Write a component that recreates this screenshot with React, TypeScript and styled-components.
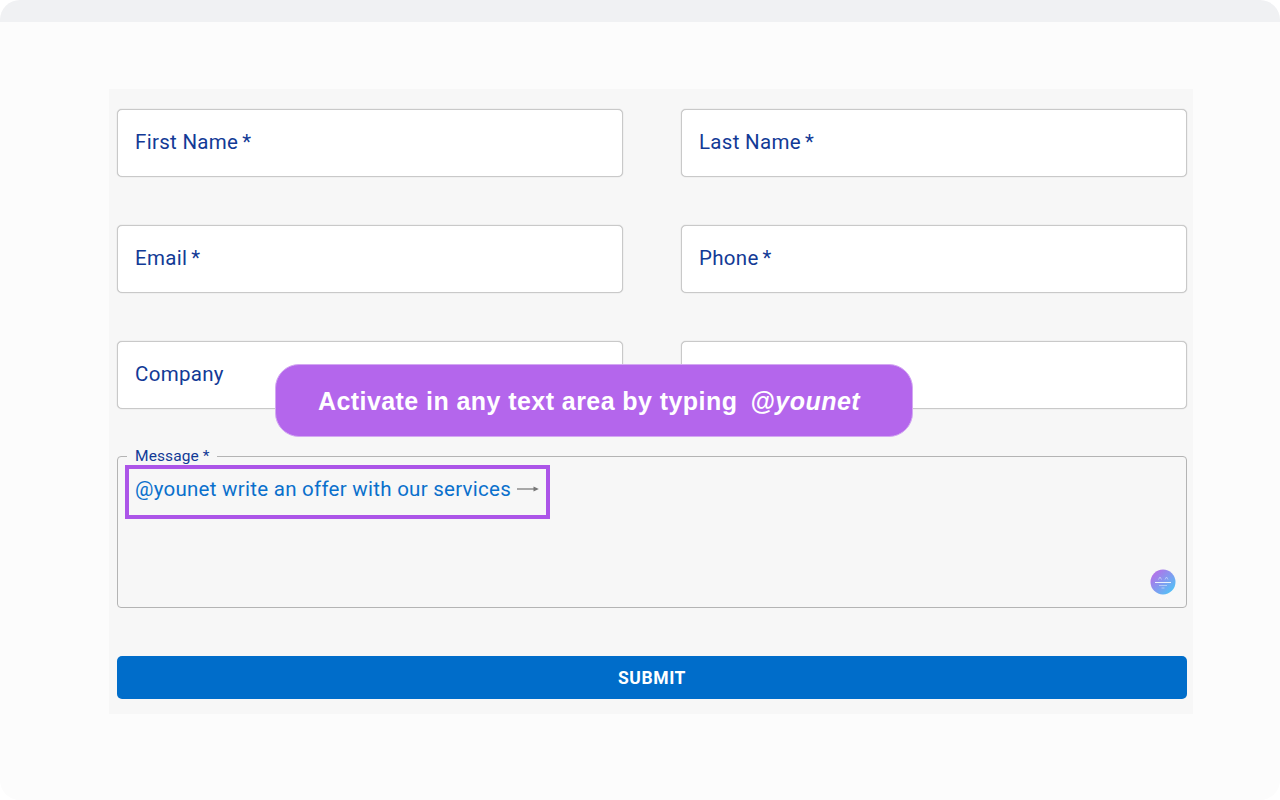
import React from "react";
import styled, { createGlobalStyle } from "styled-components";

const Global = createGlobalStyle`
  html, body { margin: 0; padding: 0; background: #ffffff; }
  body { font-family: Roboto, "Liberation Sans", sans-serif; }
`;

const Frame = styled.div`
  width: 1280px;
  height: 800px;
  display: flex;
  flex-direction: column;
  overflow: hidden;
`;

const TopBar = styled.div`
  height: 22px;
  background: #f0f1f3;
  border-radius: 20px 20px 0 0;
`;

const Body = styled.div`
  position: relative;
  flex: 1;
  background: #fcfcfc;
  border-radius: 0 0 20px 20px;
  padding: 67px 87px 0 109px;
`;

const Form = styled.form`
  box-sizing: border-box;
  width: 1084px;
  height: 625px;
  background: #f7f7f7;
  padding: 20px 6px 0 8px;
  display: flex;
  flex-direction: column;
`;

const Grid = styled.div`
  display: grid;
  grid-template-columns: 506px 506px;
  column-gap: 58px;
  row-gap: 48px;
`;

const Field = styled.div`
  box-sizing: border-box;
  height: 68px;
  background: #ffffff;
  border: 1px solid #c9c9c9;
  border-radius: 5px;
  box-shadow: 0 0 1px rgba(0, 0, 0, 0.3);
  padding: 0 17px 2px 17px;
  display: flex;
  align-items: center;
  color: #123a96;
  font-size: 20.5px;
  letter-spacing: 0.3px;
`;

const Star = styled.span`
  margin-left: 4px;
`;

const MessageBox = styled.fieldset`
  box-sizing: border-box;
  margin: 40px 0 0;
  padding: 0 7px;
  height: 159px;
  border: 1px solid #b4b4b4;
  border-radius: 4px;
  min-inline-size: auto;
`;

const Legend = styled.legend`
  margin-left: 2px;
  padding: 0 7px 0 8px;
  color: #123a96;
  font-size: 15.5px;
  line-height: 14px;
  letter-spacing: 0.1px;
`;

const MessageArea = styled.div`
  position: relative;
  height: 144px;
`;

const Highlight = styled.div`
  box-sizing: border-box;
  width: 425px;
  height: 54px;
  margin-top: 2px;
  border: 4px solid #ac55e8;
  display: flex;
  align-items: center;
  gap: 6px;
  padding: 0 6px 6px 6px;
  color: #0a70cc;
  font-size: 20.5px;
  letter-spacing: 0.27px;
  white-space: nowrap;
`;

const Badge = styled.svg`
  position: absolute;
  right: 3px;
  bottom: 14px;
  width: 26px;
  height: 26px;
`;

const Submit = styled.button`
  margin-top: 48px;
  height: 43px;
  padding: 0;
  border: none;
  border-radius: 5px;
  background: #006dca;
  color: #ffffff;
  font-family: Roboto, "Liberation Sans", sans-serif;
  font-weight: 700;
  font-size: 17.5px;
  letter-spacing: 0.6px;
`;

const Pill = styled.div`
  position: absolute;
  left: 275px;
  top: 342px;
  box-sizing: border-box;
  width: 638px;
  height: 73px;
  border-radius: 24px;
  background: #b466ec;
  border: 1px solid #d3a8f2;
  display: flex;
  align-items: center;
  padding: 2px 0 0 42px;
  color: #ffffff;
  font-family: "Liberation Sans", Arial, sans-serif;
  font-weight: 700;
  font-size: 25px;
  letter-spacing: 0.43px;
  white-space: pre;
`;

const Handle = styled.em`
  margin-left: 13px;
  font-style: italic;
  letter-spacing: 0.5px;
`;

const labels = [
  { text: "First Name", req: true },
  { text: "Last Name", req: true },
  { text: "Email", req: true },
  { text: "Phone", req: true },
  { text: "Company", req: false },
  { text: "", req: false },
];

export default function App() {
  return (
    <Frame>
      <Global />
      <TopBar />
      <Body>
        <Form onSubmit={(e) => e.preventDefault()}>
          <Grid>
            {labels.map((l, i) => (
              <Field key={i}>
                {l.text}
                {l.req && <Star>*</Star>}
              </Field>
            ))}
          </Grid>
          <MessageBox>
            <Legend>Message *</Legend>
            <MessageArea>
              <Highlight>
                @younet write an offer with our services
                <svg width="22" height="8" viewBox="0 0 22 8" aria-hidden="true">
                  <path d="M0 4H20" stroke="#949494" strokeWidth="1.6" />
                  <path d="M16.5 1.4L21.8 4L16.5 6.6Z" fill="#777777" />
                </svg>
              </Highlight>
              <Badge viewBox="0 0 26 26" aria-hidden="true">
                <defs>
                  <linearGradient id="badgeGrad" x1="0.1" y1="0.1" x2="0.9" y2="0.9">
                    <stop offset="0" stopColor="#b86ee8" />
                    <stop offset="1" stopColor="#4fc4f7" />
                  </linearGradient>
                </defs>
                <circle cx="13" cy="13" r="12.5" fill="url(#badgeGrad)" />
                <path d="M5 13.5H21" stroke="#eaf1fd" strokeWidth="1" />
                <path d="M8.5 10.5l1.5-2.5 1.5 2.5M15 10.5l1.5-2.5 1.5 2.5M9 16.5h8M11.5 19h3" stroke="#d9e6fb" strokeWidth="0.8" fill="none" opacity="0.75" />
              </Badge>
            </MessageArea>
          </MessageBox>
          <Submit type="submit">SUBMIT</Submit>
        </Form>
        <Pill>
          Activate in any text area by typing<Handle>@younet</Handle>
        </Pill>
      </Body>
    </Frame>
  );
}
